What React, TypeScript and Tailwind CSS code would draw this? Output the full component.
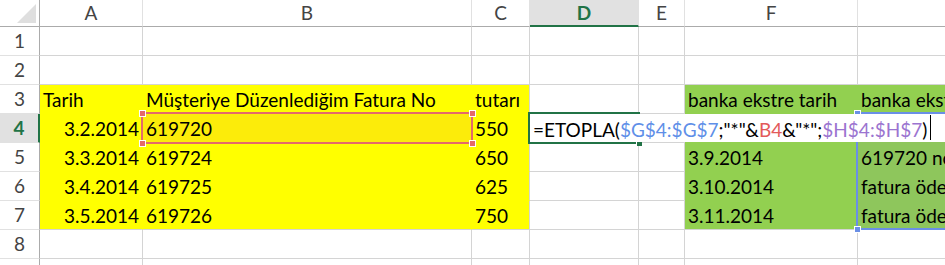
import React from "react";

const W = [103, 329, 58, 109, 46, 173, 200];
const COLS = ["A", "B", "C", "D", "E", "F", ""];

type C = { t?: string; bg?: string; align?: "l" | "r" };

const Y = "#ffff00";
const GR = "#92d050";
const GD = "#8ec65c";

const rows: C[][] = [
  [{}, {}, {}, {}, {}, {}, {}],
  [{}, {}, {}, {}, {}, {}, {}],
  [
    { t: "Tarih", bg: Y },
    { t: "Müşteriye Düzenlediğim Fatura No", bg: Y },
    { t: "tutarı", bg: Y },
    {},
    {},
    { t: "banka ekstre tarih", bg: GR },
    { t: "banka ekstre açıklama", bg: GR },
  ],
  [
    { t: "3.2.2014", bg: Y, align: "r" },
    { t: "619720", bg: "#fcec0a" },
    { t: "550", bg: Y },
    {},
    {},
    { t: "", bg: GR },
    { t: "", bg: GD },
  ],
  [
    { t: "3.3.2014", bg: Y, align: "r" },
    { t: "619724", bg: Y },
    { t: "650", bg: Y },
    {},
    {},
    { t: "3.9.2014", bg: GR },
    { t: "619720 nolu fatura ödemesi", bg: GD },
  ],
  [
    { t: "3.4.2014", bg: Y, align: "r" },
    { t: "619725", bg: Y },
    { t: "625", bg: Y },
    {},
    {},
    { t: "3.10.2014", bg: GR },
    { t: "fatura ödemesi", bg: GD },
  ],
  [
    { t: "3.5.2014", bg: Y, align: "r" },
    { t: "619726", bg: Y },
    { t: "750", bg: Y },
    {},
    {},
    { t: "3.11.2014", bg: GR },
    { t: "fatura ödemesi", bg: GD },
  ],
  [{}, {}, {}, {}, {}, {}, {}],
  [{}, {}, {}, {}, {}, {}, {}],
];

const font = { fontFamily: "Lato, 'Open Sans', sans-serif" };

function Corner({ x, y, color }: { x: number; y: number; color: string }) {
  return (
    <div
      className="absolute w-[7px] h-[7px] border border-white"
      style={{ left: x - 3, top: y - 3, background: color }}
    />
  );
}

export default function App() {
  return (
    <div
      className="relative w-[945px] h-[265px] overflow-hidden bg-white text-[19px] text-black"
      style={font}
    >
      {/* header row */}
      <div className="flex h-[27px]">
        <div className="w-[40px] shrink-0 h-[27px] border-r border-b border-r-[#ababab] border-b-[#ababab] bg-white relative">
          <svg width="39" height="26" className="absolute left-0 top-0">
            <polygon points="36,4 36,23 17,23" fill="#dfdfdf" />
          </svg>
        </div>
        {COLS.map((c, i) =>
          c === "D" ? (
            <div
              key={i}
              className="shrink-0 h-[27px] flex items-center justify-center bg-[#e1e1e1] border-r border-r-[#e1e1e1] border-b-2 border-b-[#217346] text-[#217346] font-bold pt-[1px]"
              style={{ width: W[i] }}
            >
              {c}
            </div>
          ) : (
            <div
              key={i}
              className="shrink-0 h-[27px] flex items-center justify-center border-r border-b border-r-[#e1e1e1] border-b-[#ababab] text-[#444444] pt-[1px]"
              style={{ width: W[i] }}
            >
              {c}
            </div>
          )
        )}
      </div>
      {rows.map((r, ri) => {
        const num = ri + 1;
        const active = num === 4;
        return (
          <div key={ri} className="flex h-[29px]">
            {active ? (
              <div className="w-[40px] shrink-0 h-[29px] flex items-center justify-center bg-[#e1e1e1] border-r-2 border-r-[#217346] border-b border-b-[#e1e1e1] text-[#217346] font-bold">
                {num}
              </div>
            ) : (
              <div className="w-[40px] shrink-0 h-[29px] flex items-center justify-center border-r border-b border-r-[#ababab] border-b-[#e1e1e1] text-[#444444]">
                {num}
              </div>
            )}
            {r.map((c, ci) => {
              const below = rows[ri + 1]?.[ci];
              const right = r[ci + 1];
              const bb = c.bg && below && below.bg ? c.bg : "#d4d4d4";
              const br = c.bg && right && right.bg ? c.bg : "#d4d4d4";
              return (
                <div
                  key={ci}
                  className={
                    "shrink-0 h-[29px] border-r border-b flex items-end overflow-visible whitespace-nowrap px-[3px] pb-[2px] leading-[22px] " +
                    (c.align === "r" ? "justify-end" : "justify-start")
                  }
                  style={{
                    width: W[ci],
                    background: c.bg || "#ffffff",
                    borderRightColor: br,
                    borderBottomColor: bb,
                  }}
                >
                  {c.t}
                </div>
              );
            })}
          </div>
        );
      })}

      {/* B4 red reference box */}
      <div className="absolute left-[141px] top-[112px] w-[332px] h-[32px] border-2 border-[#e46a6a]" />
      <Corner x={142} y={113} color="#e46a6a" />
      <Corner x={472} y={113} color="#e46a6a" />
      <Corner x={142} y={143} color="#e46a6a" />
      <Corner x={472} y={143} color="#e46a6a" />

      {/* G4:G7 blue reference box */}
      <div className="absolute left-[856px] top-[112px] w-[120px] h-[118px] border-2 border-[#6a8fe6]" />
      <Corner x={857} y={113} color="#6a8fe6" />
      <Corner x={857} y={229} color="#6a8fe6" />

      {/* active cell border */}
      <div className="absolute left-[528px] top-[112px] w-[112px] h-[32px] border-2 border-[#217346]" />
      <div className="absolute left-[636px] top-[141px] w-[6px] h-[5px] bg-[#217346] border-l border-t border-white" />

      {/* editing overlay */}
      <div className="absolute left-[530px] top-[114px] w-[420px] h-[28px] bg-white flex items-end whitespace-nowrap pl-[3px] pb-[1px] leading-[22px]">
        <span>=ETOPLA(</span>
        <span className="text-[#5f8fe8]">$G$4:$G$7</span>
        <span>;"*"&amp;</span>
        <span className="text-[#e35a5a]">B4</span>
        <span>&amp;"*";</span>
        <span className="text-[#9b74d0]">$H$4:$H$7</span>
        <span>)</span>
        <span className="inline-block w-[1px] h-[25px] bg-black ml-[3px] mb-[1px]" />
      </div>
    </div>
  );
}
